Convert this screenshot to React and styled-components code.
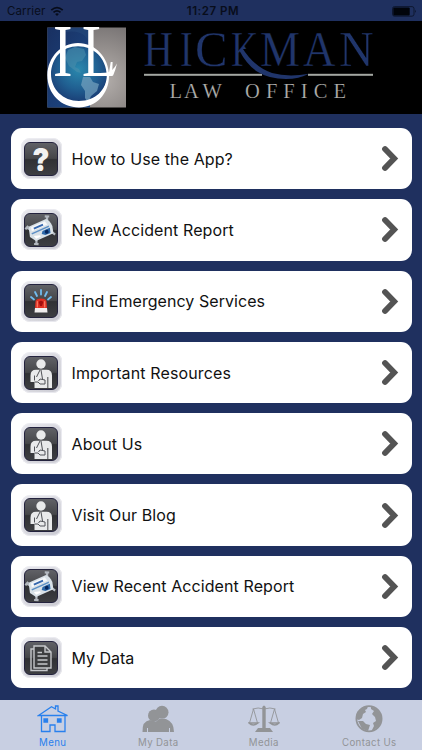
import styled, { createGlobalStyle } from "styled-components";

const menuItems = [
  { label: "How to Use the App?", icon: "help", spacing: 0.1 },
  { label: "New Accident Report", icon: "car", spacing: 0.1 },
  { label: "Find Emergency Services", icon: "siren", spacing: 0.05 },
  { label: "Important Resources", icon: "injury", spacing: 0.13 },
  { label: "About Us", icon: "injury", spacing: 0.1 },
  { label: "Visit Our Blog", icon: "injury", spacing: 0.1 },
  { label: "View Recent Accident Report", icon: "car", spacing: 0.09 },
  { label: "My Data", icon: "document", spacing: 0 },
];

const tabs = [
  { label: "Menu", icon: "home", active: true },
  { label: "My Data", icon: "people" },
  { label: "Media", icon: "scales" },
  { label: "Contact Us", icon: "globe" },
];

const titleLetters = [
  { char: "H", x: 143.5, scale: 0.8 },
  { char: "I", x: 180, scale: 0.74 },
  { char: "C", x: 195, scale: 0.96 },
  { char: "M", x: 260, scale: 0.88 },
  { char: "A", x: 303, scale: 0.88 },
  { char: "N", x: 339, scale: 0.94 },
];

const App = () => {
  return (
    <Screen>
      <GlobalStyle />
      <StatusBar>
        <Carrier>
          Carrier
          <WifiIcon />
        </Carrier>
        <Time>11:27 PM</Time>
        <BatteryIcon />
      </StatusBar>
      <Banner>
        <Logo />
      </Banner>
      <MenuList>
        {menuItems.map((item) => (
          <MenuRow key={item.label}>
            <Badge>
              <BadgeFace>
                <BadgeIcon name={item.icon} />
              </BadgeFace>
            </Badge>
            <MenuLabel $spacing={item.spacing}>{item.label}</MenuLabel>
            <Chevron viewBox="0 0 18 27">
              <path d="M4 4L13.2 13.5L4 23" />
            </Chevron>
          </MenuRow>
        ))}
      </MenuList>
      <TabBar>
        {tabs.map((tab) => (
          <Tab key={tab.label} $active={tab.active}>
            <TabIcon name={tab.icon} />
            {tab.label}
          </Tab>
        ))}
      </TabBar>
    </Screen>
  );
};

export default App;

const WifiIcon = () => (
  <svg width="14" height="11" viewBox="0 0 14 11" fill="none" stroke="#070c1a">
    <path d="M1.3 4.1Q7-1 12.7 4.1" strokeWidth="1.7" />
    <path d="M3.5 6.4Q7 3.4 10.5 6.4" strokeWidth="1.6" />
    <path d="M5.1 8Q7 6.5 8.9 8L7 10Z" fill="#070c1a" stroke="none" />
  </svg>
);

const BatteryIcon = () => (
  <svg width="25" height="11" viewBox="0 0 25 11">
    <rect x=".5" y=".6" width="21.5" height="9.6" rx="2" fill="none" stroke="#0a1124" strokeWidth=".8" />
    <rect x="1.3" y="1.4" width="16.4" height="8" rx="1" fill="#01040b" />
    <path d="M23 3.8Q24.6 5.4 23 7Z" fill="#0a1124" />
  </svg>
);

const Logo = () => (
  <svg width="422" height="93" viewBox="0 21 422 93">
    <defs>
      <linearGradient id="navy" x1="0" y1="0" x2="1" y2="1">
        <stop offset="0" stopColor="#193061" />
        <stop offset="1" stopColor="#1d4a88" />
      </linearGradient>
      <radialGradient id="silver" cx=".7" cy=".65" r=".8">
        <stop offset="0" stopColor="#b5b0ad" />
        <stop offset=".5" stopColor="#938e8c" />
        <stop offset="1" stopColor="#706c6d" />
      </radialGradient>
      <radialGradient id="ocean" cx=".5" cy=".42" r=".62">
        <stop offset="0" stopColor="#2a89ae" />
        <stop offset=".55" stopColor="#205f91" />
        <stop offset="1" stopColor="#19366f" />
      </radialGradient>
    </defs>
    <rect x="47.3" y="27.5" width="78.7" height="80" fill="url(#silver)" />
    <path d="M47.3 27.5H90V107.5H47.3Z" fill="url(#navy)" />
    <path d="M66 32Q86 29 90 46V28H66Z" fill="#254779" opacity=".6" />
    <circle cx="78.5" cy="74" r="29" fill="url(#ocean)" />
    <path d="M68 50L75 47L84 49L86 55L82 61L77 62L75 67L79 69L81 73L77 72L69 66L65 58Z" fill="#4a8dac" opacity=".6" />
    <path d="M83 77L90 77L93 82L99 84L97 91L91 96L88 103L85 98L85 91L81 85Z" fill="#719fbc" opacity=".75" />
    <LogoLetter transform="translate(53 75.8) scale(.8 1)">I</LogoLetter>
    <LogoLetter transform="translate(82 75.8) scale(.76 1)">L</LogoLetter>
    <path d="M107 73Q113 71 117 63.5Q115.5 70 113 75.8H103V73Z" fill="#fff" />
    <path
      fillRule="evenodd"
      fill="#fff"
      d="M78 43C95 43 109 57 109 76C109 94 96 107.4 79 107.4C61 107.4 47.3 94 47.3 75C48 57 61 43 78 43ZM78 46.2C62 46.2 51.5 58 51 74C51 89 63 101 79 101C95 101 106.8 90 106.8 75C106 58 94 46.2 78 46.2Z"
    />
    <rect x="144" y="73.8" width="118" height="2" fill="#a3a7a2" />
    <rect x="308" y="73.8" width="65" height="2" fill="#a3a7a2" />
    <TitleLetter transform="translate(231 66) scale(.74 1)">K</TitleLetter>
    <path d="M242.4 49L262 49V67H243.5Z" fill="#000" />
    {titleLetters.map(({ char, x, scale }) => (
      <TitleLetter key={char} transform={`translate(${x} 66) scale(${scale} 1)`}>
        {char}
      </TitleLetter>
    ))}
    <path d="M239 50L242 47.5Q254 67 272 73Q288 77.5 309 73.8Q299 79 286 79Q269 79 257 71.5Q247 65 239 50Z" fill="#20356b" />
    <Subtitle x="169.5 184 202.5" y="98">
      LAW
    </Subtitle>
    <Subtitle x="245" y="98" textLength="101">
      OFFICE
    </Subtitle>
  </svg>
);

const CarDrawing = () => (
  <g transform="rotate(-24 16 16)">
    <path d="M7 12L4 8M2 9L6 7M25 11L27 6M25 5L29 7M8 23L6 27M4 26L8 28M25 22L27 26" stroke="#b3b8bf" strokeWidth="2.2" />
    <path d="M6 8H25Q28 11 28 17L26 24H7L3 18Z" fill="#d9e1e7" />
    <path d="M8 9.5H23L24 13.5H7Z" fill="#f6f8fa" />
    <path d="M10 11H20V12.8H10Z" fill="#3567ad" />
    <path d="M6 15H25L24.5 16.5H6Z" fill="#5c8fc5" />
    <path d="M17 17.5H25L23.5 22.5H18L15 20Z" fill="#2b67a8" />
    <circle cx="20.5" cy="20" r="1.9" fill="#06265c" />
    <path d="M7 18.5L13 20.5V22H8Z" fill="#fff" />
  </g>
);

const InjuryDrawing = () => (
  <g fill="#e9eaeb">
    <circle cx="16" cy="7" r="4.7" />
    <path d="M5.5 25V18.5Q5.5 12.8 11 12.8H21.5Q27 12.8 27 18.5V31H23.3V20H22.4V31H9.5V25Z" />
    <path d="M15 13L11.5 20M9.5 18.5V23.5M9.5 25H13L15 27H20V23L15 22L13.5 24M16 13L17.5 22" stroke="#515358" strokeWidth="1" fill="none" />
  </g>
);

const SirenDrawing = () => (
  <g strokeLinecap="round">
    <path d="M6 12L9 14.5M10 7L12 11M16 5V9.5M22 7L20 11M26 12L23 14.5" stroke="#71bcef" strokeWidth="1.8" />
    <path d="M10 24L10.5 16.5Q11 13.5 16 13.5Q21 13.5 21.5 16.5L22 24Z" fill="#df3022" />
    <path d="M12.3 16.5V22M19.7 16.5V22" stroke="#fb7b64" strokeWidth="1.2" />
    <path d="M13.7 17Q16 14.5 18.3 17L17 21H15Z" fill="#a20d0c" />
    <path d="M10 23H22L22.5 27.5H9.5Z" fill="#f0eded" />
  </g>
);

const DocumentDrawing = () => (
  <g fill="none" stroke="#c5c7ca" strokeWidth="1.4">
    <path d="M9 7H6V28.5H22V26" />
    <path d="M9 4H20L26 10V26H9ZM20 4V10H26" fill="#3d3e40" />
    <path d="M12.5 10.5H17M12.5 14H22.5M12.5 18H22.5M12.5 22H22.5" />
  </g>
);

const HelpDrawing = () => (
  <QuestionMark transform="translate(16 27.5) scale(.88 1)">
    ?
  </QuestionMark>
);

const drawings = {
  help: HelpDrawing,
  car: CarDrawing,
  siren: SirenDrawing,
  injury: InjuryDrawing,
  document: DocumentDrawing,
};

const BadgeIcon = ({ name }) => {
  const Drawing = drawings[name];
  return (
    <svg width="32" height="32" viewBox="0 0 32 32">
      <Drawing />
    </svg>
  );
};

const TabIcon = ({ name }) => (
  <svg width="32" height="30" viewBox="0 0 32 30" fill="none" stroke="currentColor">
    {name === "home" && (
      <g strokeWidth="1.3">
        <path d="M1.5 11.5L14.5 2.7L18.5 5V2H21V7L30.5 11.5Z" />
        <path d="M4.5 12V27.5H13V21H18V27.5H28V12" />
        <path d="M7 15H10.5V18H7ZM20.5 15H24V18H20.5Z" fill="currentColor" />
      </g>
    )}
    {name === "people" && (
      <g fill="currentColor" stroke="none">
        <circle cx="12" cy="11.5" r="6" />
        <circle cx="20" cy="8.3" r="6.5" />
        <path d="M.5 28Q0 17 8 16L14 17.5L17 15H24Q32 18 32 28H28V24H27V28H6V24H5V28Z" />
      </g>
    )}
    {name === "scales" && (
      <g strokeWidth=".9">
        <path d="M4.5 5Q10 3 16 5Q22 3 27.5 5M5.5 5L1.5 19M5.5 5L9.5 19M26.5 5L22.5 19M26.5 5L30.5 19" />
        <path d="M1 19Q5 23 10 19ZM22 19Q27 23 31 19Z" strokeWidth="1.4" />
        <path d="M14.3 3Q16 0 17.7 3V24H22L25 28H7L10 24H14.3Z" fill="currentColor" stroke="none" />
      </g>
    )}
    {name === "globe" && (
      <g>
        <circle cx="16" cy="14.7" r="12.6" strokeWidth="1.8" />
        <path
          d="M4 8L10 3L15 2L14 5L12 6L13 8L10 10L9 14L6 16L3 15ZM5 17L10 17L13 20L17 21L15 27L9 25ZM18 2L24 5L28 11L28.5 17L26 22L21 26L19 26L21 22L20 19L23 17L22 13L19 10L21 7L18 5Z"
          fill="currentColor"
          stroke="none"
        />
      </g>
    )}
  </svg>
);

const GlobalStyle = createGlobalStyle`
  * {
    box-sizing: border-box;
  }

  body {
    margin: 0;
    background: #1f305f;
    font-family: Inter, "Liberation Sans", sans-serif;
  }
`;

const Screen = styled.div`
  display: flex;
  flex-direction: column;
  width: 422px;
  height: 750px;
  overflow: hidden;
  background: #1f305f;
`;

const StatusBar = styled.header`
  display: grid;
  grid-template-columns: 1fr auto 1fr;
  align-items: center;
  height: 21px;
  padding: 1px 5px 0 7px;
  color: #080d1b;
  font-size: 11.5px;

  > svg {
    justify-self: end;
  }
`;

const Carrier = styled.div`
  display: flex;
  align-items: center;
  gap: 5px;
  letter-spacing: 0.1px;
`;

const Time = styled.div`
  padding-left: 2px;
  font-weight: 600;
  letter-spacing: 0.55px;
`;

const Banner = styled.div`
  height: 93px;
  background: #000;

  svg {
    display: block;
    overflow: visible;
  }
`;

const LogoLetter = styled.text`
  font-family: "Liberation Serif", serif;
  font-size: 73px;
  fill: #fff;
`;

const TitleLetter = styled.text`
  font-family: "Liberation Serif", serif;
  font-size: 51px;
  fill: #20356b;
  stroke: #000;
  stroke-width: 0.4px;
`;

const Subtitle = styled.text`
  font-family: "Liberation Serif", serif;
  font-size: 20.5px;
  fill: #b0b0ae;
  stroke: #000;
  stroke-width: 0.2px;
`;

const MenuList = styled.main`
  display: grid;
  grid-template-rows: repeat(8, 61.3px);
  gap: 10px;
  height: 585.5px;
  padding: 14px 10.5px 0;
`;

const MenuRow = styled.div`
  display: flex;
  align-items: center;
  padding: 0 13px 0 10px;
  border-radius: 11px;
  background: #fff;
`;

const Badge = styled.div`
  display: flex;
  align-items: center;
  justify-content: center;
  width: 41px;
  height: 41px;
  border-radius: 9px;
  background: linear-gradient(135deg, #e9e9ee, #c9c9d1);
  box-shadow: inset 0 0 1px 1px #ededf2;
`;

const BadgeFace = styled.div`
  display: flex;
  align-items: center;
  justify-content: center;
  width: 34px;
  height: 34px;
  border: 1px solid #24233e;
  border-radius: 6px;
  background: linear-gradient(#606166, #454649 48%, #303134 52%, #3d3e42);

  svg {
    overflow: visible;
  }
`;

const QuestionMark = styled.text`
  font-family: Inter, sans-serif;
  font-size: 32px;
  font-weight: 900;
  text-anchor: middle;
  fill: #f2f2f2;
`;

const MenuLabel = styled.div`
  flex: 1;
  margin-left: 10px;
  color: #111;
  font-size: 16px;
  letter-spacing: ${({ $spacing }) => $spacing}px;
  white-space: nowrap;
`;

const Chevron = styled.svg`
  width: 18px;
  height: 27px;
  fill: none;
  stroke: #545454;
  stroke-width: 5.8;
  stroke-linecap: round;
`;

const TabBar = styled.nav`
  display: grid;
  grid-template-columns: repeat(4, 1fr);
  height: 50.5px;
  background: #c8cfe2;
`;

const Tab = styled.div`
  display: flex;
  flex-direction: column;
  align-items: center;
  padding-top: 4px;
  color: ${({ $active }) => ($active ? "#2880ed" : "#929497")};
  font-size: 9.7px;
  line-height: 18px;
  letter-spacing: 0.35px;

  svg {
    display: block;
    flex-shrink: 0;
  }
`;
